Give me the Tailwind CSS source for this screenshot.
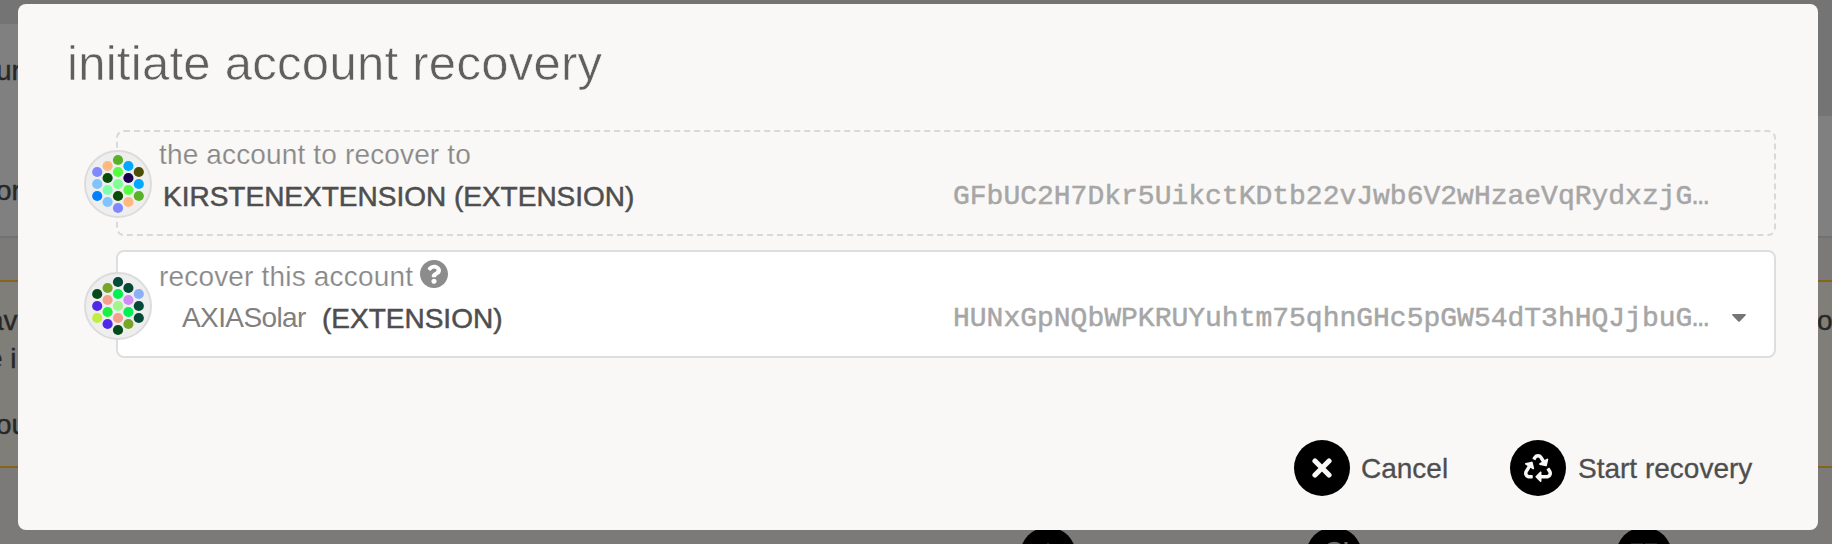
<!DOCTYPE html>
<html lang="en">
<head>
<meta charset="utf-8">
<title>Account recovery</title>
<script src="https://cdn.jsdelivr.net/npm/@tailwindcss/browser@4"></script>
</head>
<body class="relative h-[544px] w-[1832px] overflow-hidden bg-[#7b7a78] font-['Liberation_Sans',Arial,sans-serif] text-[28px] leading-8 text-[#4e4e4e]">
  <!-- dimmed page behind the modal -->
  <div class="absolute inset-0 flex flex-col overflow-hidden text-[#272727] [-webkit-text-stroke:.4px_#272727]">
    <div class="flex h-[238px] shrink-0 border-b-2 border-[#717171]">
      <div class="w-1/2 bg-[#808080]">
        <div class="h-6 bg-[#747474]"></div>
        <div class="mt-[31px] -ml-[4px]">ur</div>
        <div class="mt-[88px] -ml-[4px]">or</div>
      </div>
      <div class="w-1/2 bg-[#808080]"><div class="h-[116px] bg-[#747474]"></div></div>
    </div>
    <div class="mt-[42px] flex h-[188px] shrink-0 justify-between border-y-2 border-[#86651a] bg-[#807e78]">
      <div>
        <div class="mt-[23px] -ml-[12px]">av</div>
        <div class="mt-[6px] -ml-[13px]">e i</div>
        <div class="mt-[34px] -ml-[4px]">ou</div>
      </div>
      <div class="mt-[23px] w-[15px]">o</div>
    </div>
    <div class="mt-[59px] flex shrink-0 pl-[1020px]">
      <div class="size-14 shrink-0 rounded-full bg-black"><svg class="size-14" viewBox="0 0 56 56"><circle cx="28" cy="17" r="1" fill="#333"/></svg></div>
      <div class="ml-[230px] size-14 shrink-0 rounded-full bg-black"><svg class="size-14" viewBox="0 0 56 56" fill="none" stroke="#6b6a68" stroke-width="3"><path d="M20 20Q28 13 35 19M40 15v9"/></svg></div>
      <div class="ml-[254px] size-14 shrink-0 rounded-full bg-black"><svg class="size-14" viewBox="0 0 56 56" fill="#222"><path d="M15 16h12v8H15zM29 16h12v8H29z"/></svg></div>
    </div>
  </div>

  <main class="absolute top-1 left-[18px] flex h-[526px] w-[1800px] flex-col rounded-lg bg-[#f9f8f6]">
    <h1 class="mt-[29px] ml-[49px] h-[60px] text-[49px] leading-[60px] tracking-[.28px] whitespace-nowrap text-[#5f5f5f] [-webkit-text-stroke:.6px_#f9f8f6]">initiate account recovery</h1>

    <section class="relative mt-[37px] ml-[98px] h-[106px] w-[1660px] rounded-lg border-2 border-dashed border-[#d9d9d8]">
      <svg class="absolute top-[18px] -left-[34px] size-[68px] rounded-full border-2 border-[#dcdcdc] bg-[#eee]" viewBox="0 0 64 64"><g id="id1"></g></svg>
      <div class="mt-[7px] ml-[41px] h-8 tracking-[.15px] whitespace-nowrap text-[#888] [-webkit-text-stroke:.2px_#f9f8f6]">the account to recover to</div>
      <div class="mt-[10px] ml-[45px] flex h-8 whitespace-nowrap">
        <div class="w-[790px] [-webkit-text-stroke:.5px_#4e4e4e]">KIRSTENEXTENSION (EXTENSION)</div>
        <div class="font-['Liberation_Mono',monospace] text-[#a6a6a6] [-webkit-text-stroke:.5px_#a6a6a6]">GFbUC2H7Dkr5UikctKDtb22vJwb6V2wHzaeVqRydxzjG…</div>
      </div>
    </section>

    <section class="relative mt-[14px] ml-[98px] h-[108px] w-[1660px] rounded-lg border-2 border-[#dededf] bg-white">
      <svg class="absolute top-[20px] -left-[34px] size-[68px] rounded-full border-2 border-[#dcdcdc] bg-[#eee]" viewBox="0 0 64 64"><g id="id2"></g></svg>
      <div class="mt-[8px] ml-[41px] flex h-8 whitespace-nowrap text-[#888]">
        <div class="mt-px w-[261px] tracking-[.18px] [-webkit-text-stroke:.2px_#fff]">recover this account</div>
        <svg class="size-7" viewBox="8 8 496 496" fill="#8c8c8c"><path d="M504 256c0 136.997-111.043 248-248 248S8 392.997 8 256C8 119.083 119.043 8 256 8s248 111.083 248 248zM262.655 90c-54.497 0-89.255 22.957-116.549 63.758-3.536 5.286-2.353 12.415 2.715 16.258l34.699 26.31c5.205 3.947 12.621 3.008 16.665-2.122 17.864-22.658 30.113-35.797 57.303-35.797 20.429 0 45.698 13.148 45.698 32.958 0 14.976-12.363 22.667-32.534 33.976C247.128 238.528 216 254.941 216 296v4c0 6.627 5.373 12 12 12h56c6.627 0 12-5.373 12-12v-1.333c0-28.462 83.186-29.647 83.186-106.667 0-58.002-60.165-102-116.531-102zM256 338c-25.365 0-46 20.635-46 46 0 25.364 20.635 46 46 46s46-20.636 46-46c0-25.365-20.635-46-46-46z"/></svg>
      </div>
      <div class="mt-[10px] ml-[64px] flex h-8 whitespace-nowrap">
        <div class="w-[140px] tracking-[-.6px] text-[#808080]">AXIASolar</div>
        <div class="mt-px w-[631px] [-webkit-text-stroke:.5px_#4e4e4e]">(EXTENSION)</div>
        <div class="mt-px w-[779px] font-['Liberation_Mono',monospace] text-[#a6a6a6] [-webkit-text-stroke:.5px_#a6a6a6]">HUNxGpNQbWPKRUYuhtm75qhnGHc5pGW54dT3hHQJjbuG…</div>
        <svg class="mt-3 h-2 w-[14px]" viewBox="0 0 14 8"><path d="M1 0h12q1.500 .2 .5 1.500L8 7.300q-1 1-2 0L.5 1.500Q-.5 .2 1 0z" fill="#757575"/></svg>
      </div>
    </section>

    <div class="mt-[82px] ml-[1276px] flex h-14 items-center whitespace-nowrap">
      <div class="flex w-[216px] items-center">
        <div class="flex size-14 shrink-0 items-center justify-center rounded-full bg-black"><svg class="size-5" viewBox="0 0 20 20"><path d="M3 3L17 17M17 3L3 17" stroke="#f9f8f6" stroke-width="5.200" stroke-linecap="round"/></svg></div>
        <div class="ml-[11px] pt-0.5 [-webkit-text-stroke:.3px_#4e4e4e]">Cancel</div>
      </div>
      <div class="flex items-center">
        <div class="flex size-14 shrink-0 items-center justify-center rounded-full bg-black"><svg class="size-7" viewBox="0 0 512 512" fill="#f9f8f6"><path d="M184.561 261.903c3.232 13.997-12.123 24.635-24.068 17.168l-40.736-25.455-50.867 81.402C55.606 356.273 70.960 384 96.012 384H148c6.627 0 12 5.373 12 12v40c0 6.627-5.373 12-12 12H96.115c-75.334 0-121.302-83.048-81.408-146.880l50.822-81.388-40.725-25.448c-12.081-7.547-8.966-25.961 4.879-29.158l110.237-25.450c8.611-1.988 17.201 3.381 19.189 11.990l25.452 110.237zm98.561-182.915l41.289 66.076-40.740 25.457c-12.051 7.528-9 25.953 4.879 29.158l110.237 25.450c8.672 1.999 17.215-3.438 19.189-11.990l25.450-110.237c3.197-13.844-11.990-24.719-24.068-17.168l-40.687 25.424-41.263-66.082c-37.521-60.033-125.209-60.171-162.816 0l-17.963 28.766c-3.510 5.620-1.800 13.021 3.820 16.533l33.919 21.195c5.620 3.512 13.024 1.803 16.536-3.817l17.961-28.743c12.712-20.341 41.973-19.676 54.257-.022zM497.288 301.120l-27.515-44.065c-3.511-5.623-10.916-7.334-16.538-3.821l-33.861 21.159c-5.620 3.512-7.330 10.915-3.818 16.536l27.564 44.112c13.257 21.211-2.057 48.960-27.136 48.960H320V336.020c0-14.213-17.242-21.383-27.313-11.313l-80 79.981c-6.249 6.248-6.249 16.379 0 22.627l80 79.989C302.689 517.308 320 510.300 320 495.989V448h95.880c75.274 0 121.335-82.997 81.408-146.880z"/></svg></div>
        <div class="ml-[12px] pt-0.5 [-webkit-text-stroke:.3px_#4e4e4e]">Start recovery</div>
      </div>
    </div>
  </main>
<script>
  // 19 identicon dots, column by column
  const pts = [[32,8],[32,20],[32,32],[32,44],[32,56],[21.600,14],[21.600,26],[21.600,38],[21.600,50],[11.200,20],[11.200,32],[11.200,44],[42.400,14],[42.400,26],[42.400,38],[42.400,50],[52.800,20],[52.800,32],[52.800,44]];
  const sets = {
    id1: '#59b128 #55ff40 #80ff95 #084d08 #8088ff #ffb980 #084d08 #80ffaa #80c4ff #8088ff #80c4ff #0080ff #00a8ff #1a004d #55ff40 #ffb980 #4d4d08 #00a8ff #59b128',
    id2: '#044a36 #04f050 #a0f58c #f5a08c #044a1a #78a428 #f5a08c #1af040 #5028e8 #044a1a #5028e8 #c0ee40 #044a36 #d08cf5 #04f050 #78a428 #8cb0f5 #044a36 #044a36'
  };
  for (const id in sets) document.getElementById(id).innerHTML = sets[id].split(' ').map((c, i) => `<circle cx="${pts[i][0]}" cy="${pts[i][1]}" r="5.1" fill="${c}"/>`).join('');
</script>
</body>
</html>
